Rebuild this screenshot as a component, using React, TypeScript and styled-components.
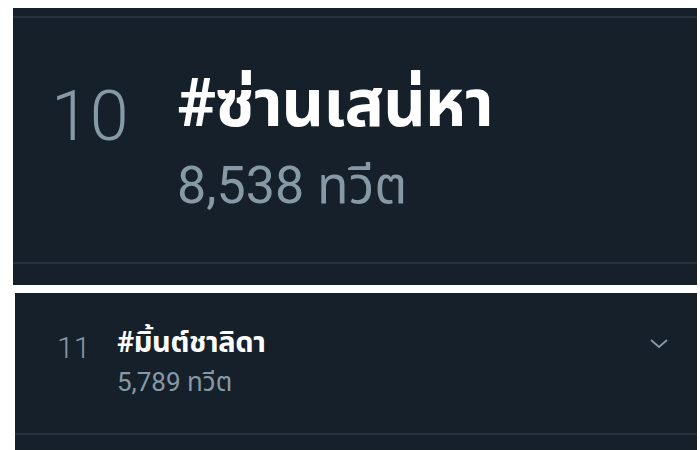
import styled, { createGlobalStyle } from 'styled-components'

const Global = createGlobalStyle`
  html, body {
    margin: 0;
    padding: 0;
    background: #ffffff;
    width: 700px;
    height: 450px;
    overflow: hidden;
  }
  body {
    font-family: Roboto, "Noto Sans", "Noto Sans Thai", sans-serif;
  }
`

const Page = styled.div`
  display: flex;
  flex-direction: column;
  gap: 8px;
  padding: 8px 3px 0 13px;
`

const Panel = styled.div<{ $height: number; $inset?: number }>`
  background: #15202b;
  height: ${(p) => p.$height}px;
  margin-left: ${(p) => p.$inset ?? 0}px;
  display: flex;
  flex-direction: column;
`

const Rule = styled.div`
  height: 2px;
  background: #26323e;
  flex-shrink: 0;
`

const Spacer = styled.div<{ $h: number }>`
  height: ${(p) => p.$h}px;
  flex-shrink: 0;
`

const Row = styled.div<{ $big?: boolean }>`
  flex: 1;
  display: flex;
  align-items: flex-start;
  position: relative;
  padding: ${(p) => (p.$big ? '63px 0 0 38px' : '40px 0 0 42px')};
`

const Rank = styled.div<{ $big?: boolean }>`
  color: #8899a6;
  font-family: Roboto, sans-serif;
  font-weight: 300;
  font-size: ${(p) => (p.$big ? '70px' : '30px')};
  line-height: 1;
  width: ${(p) => (p.$big ? '126px' : '60px')};
`

const Info = styled.div`
  display: flex;
  flex-direction: column;
`

const Tag = styled.div<{ $big?: boolean }>`
  color: #ffffff;
  font-weight: 700;
  font-size: ${(p) => (p.$big ? '66px' : '29px')};
  letter-spacing: ${(p) => (p.$big ? '-1px' : '-0.4px')};
  line-height: 1.2;
  margin-top: ${(p) => (p.$big ? '-17px' : '-8px')};
`

const Count = styled.div<{ $big?: boolean }>`
  color: #8899a6;
  font-size: ${(p) => (p.$big ? '52px' : '26px')};
  line-height: 1.2;
  margin-top: ${(p) => (p.$big ? '12px' : '7px')};
`

const Chevron = styled.svg`
  position: absolute;
  right: 28px;
  top: 45px;
`

export default function App() {
  return (
    <>
      <Global />
      <Page>
        <Panel $height={277}>
          <Spacer $h={8} />
          <Rule />
          <Row $big>
            <Rank $big>10</Rank>
            <Info>
              <Tag $big>#ซ่านเสน่หา</Tag>
              <Count $big>8,538 ทวีต</Count>
            </Info>
          </Row>
          <Rule />
          <Spacer $h={21} />
        </Panel>
        <Panel $height={160} $inset={2}>
          <Row>
            <Rank>11</Rank>
            <Info>
              <Tag>#มิ้นต์ชาลิดา</Tag>
              <Count>5,789 ทวีต</Count>
            </Info>
            <Chevron width="20" height="12" viewBox="0 0 20 12">
              <path d="M2 2 L10 9 L18 2" fill="none" stroke="#8899a6" strokeWidth="1.8" />
            </Chevron>
          </Row>
          <Rule />
          <Spacer $h={18} />
        </Panel>
      </Page>
    </>
  )
}
